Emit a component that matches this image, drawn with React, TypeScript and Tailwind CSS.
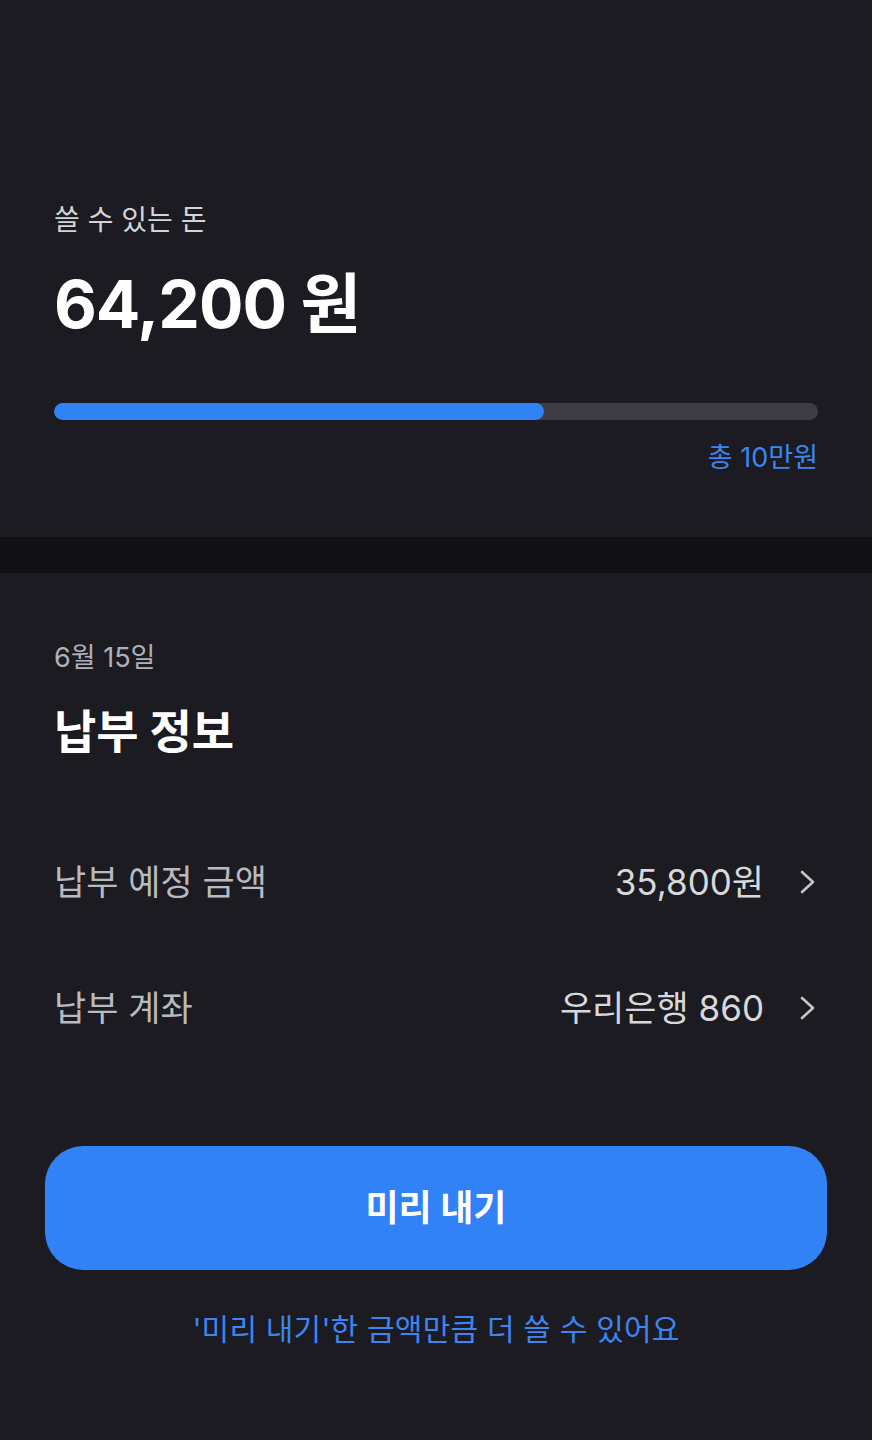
import React from "react";

const FONT = { fontFamily: 'Inter, "Noto Sans CJK KR", sans-serif' };

function Chevron() {
  return (
    <svg width="20" height="26" viewBox="0 0 20 26" fill="none" className="shrink-0">
      <polyline points="4,3 15,13 4,23" stroke="#c4c4ca" strokeWidth="2.6" strokeLinecap="round" strokeLinejoin="round" />
    </svg>
  );
}

function Row({ label, value, className }: { label: string; value: string; className?: string }) {
  return (
    <div className={`flex items-center justify-between ${className ?? ""}`}>
      <span className="text-[35px] leading-[44px] text-[#b9b9c0]">{label}</span>
      <div className="flex items-center gap-[34px]">
        <span className="text-[35px] leading-[44px] text-[#d8d8dc]">{value}</span>
        <Chevron />
      </div>
    </div>
  );
}

export default function App() {
  const spent = 64200;
  const total = 100000;
  const pct = (spent / total) * 100;

  return (
    <div className="w-[872px] h-[1440px] bg-[#1b1b21] overflow-hidden" style={FONT}>
      {/* available money */}
      <section className="px-[54px] pt-[202px] pb-[62px]">
        <p className="text-[28px] leading-[36px] text-[#d4d4d8]">쓸 수 있는 돈</p>
        <p className="mt-[26px] text-[66px] leading-[80px] font-bold text-white tracking-[-1px]">64,200 원</p>
        <div className="mt-[59px] h-[17px] rounded-full bg-[#3d3d47] overflow-hidden">
          <div className="h-full rounded-full bg-[#3182f6]" style={{ width: `${pct}%` }} />
        </div>
        <p className="mt-[21px] text-right text-[27px] leading-[34px] text-[#3b86f0]">총 10만원</p>
      </section>

      <div className="h-[36px] bg-[#111114]" />

      {/* payment info */}
      <section className="px-[54px] pt-[68px]">
        <p className="text-[27px] leading-[34px] text-[#b0b0b7]">6월 15일</p>
        <h2 className="mt-[28px] text-[46px] leading-[56px] font-bold text-white">납부 정보</h2>
        <Row className="mt-[101px]" label="납부 예정 금액" value="35,800원" />
        <Row className="mt-[82px]" label="납부 계좌" value="우리은행 860" />
      </section>

      <div className="px-[45px] mt-[116px]">
        <button className="w-full h-[124px] rounded-[38px] bg-[#3182f6] text-white text-[36px] font-bold">
          미리 내기
        </button>
      </div>
      <p className="mt-[39px] text-center text-[30px] leading-[40px] tracking-[0.2px] text-[#3b86f0]">
        '미리 내기'한 금액만큼 더 쓸 수 있어요
      </p>
    </div>
  );
}
